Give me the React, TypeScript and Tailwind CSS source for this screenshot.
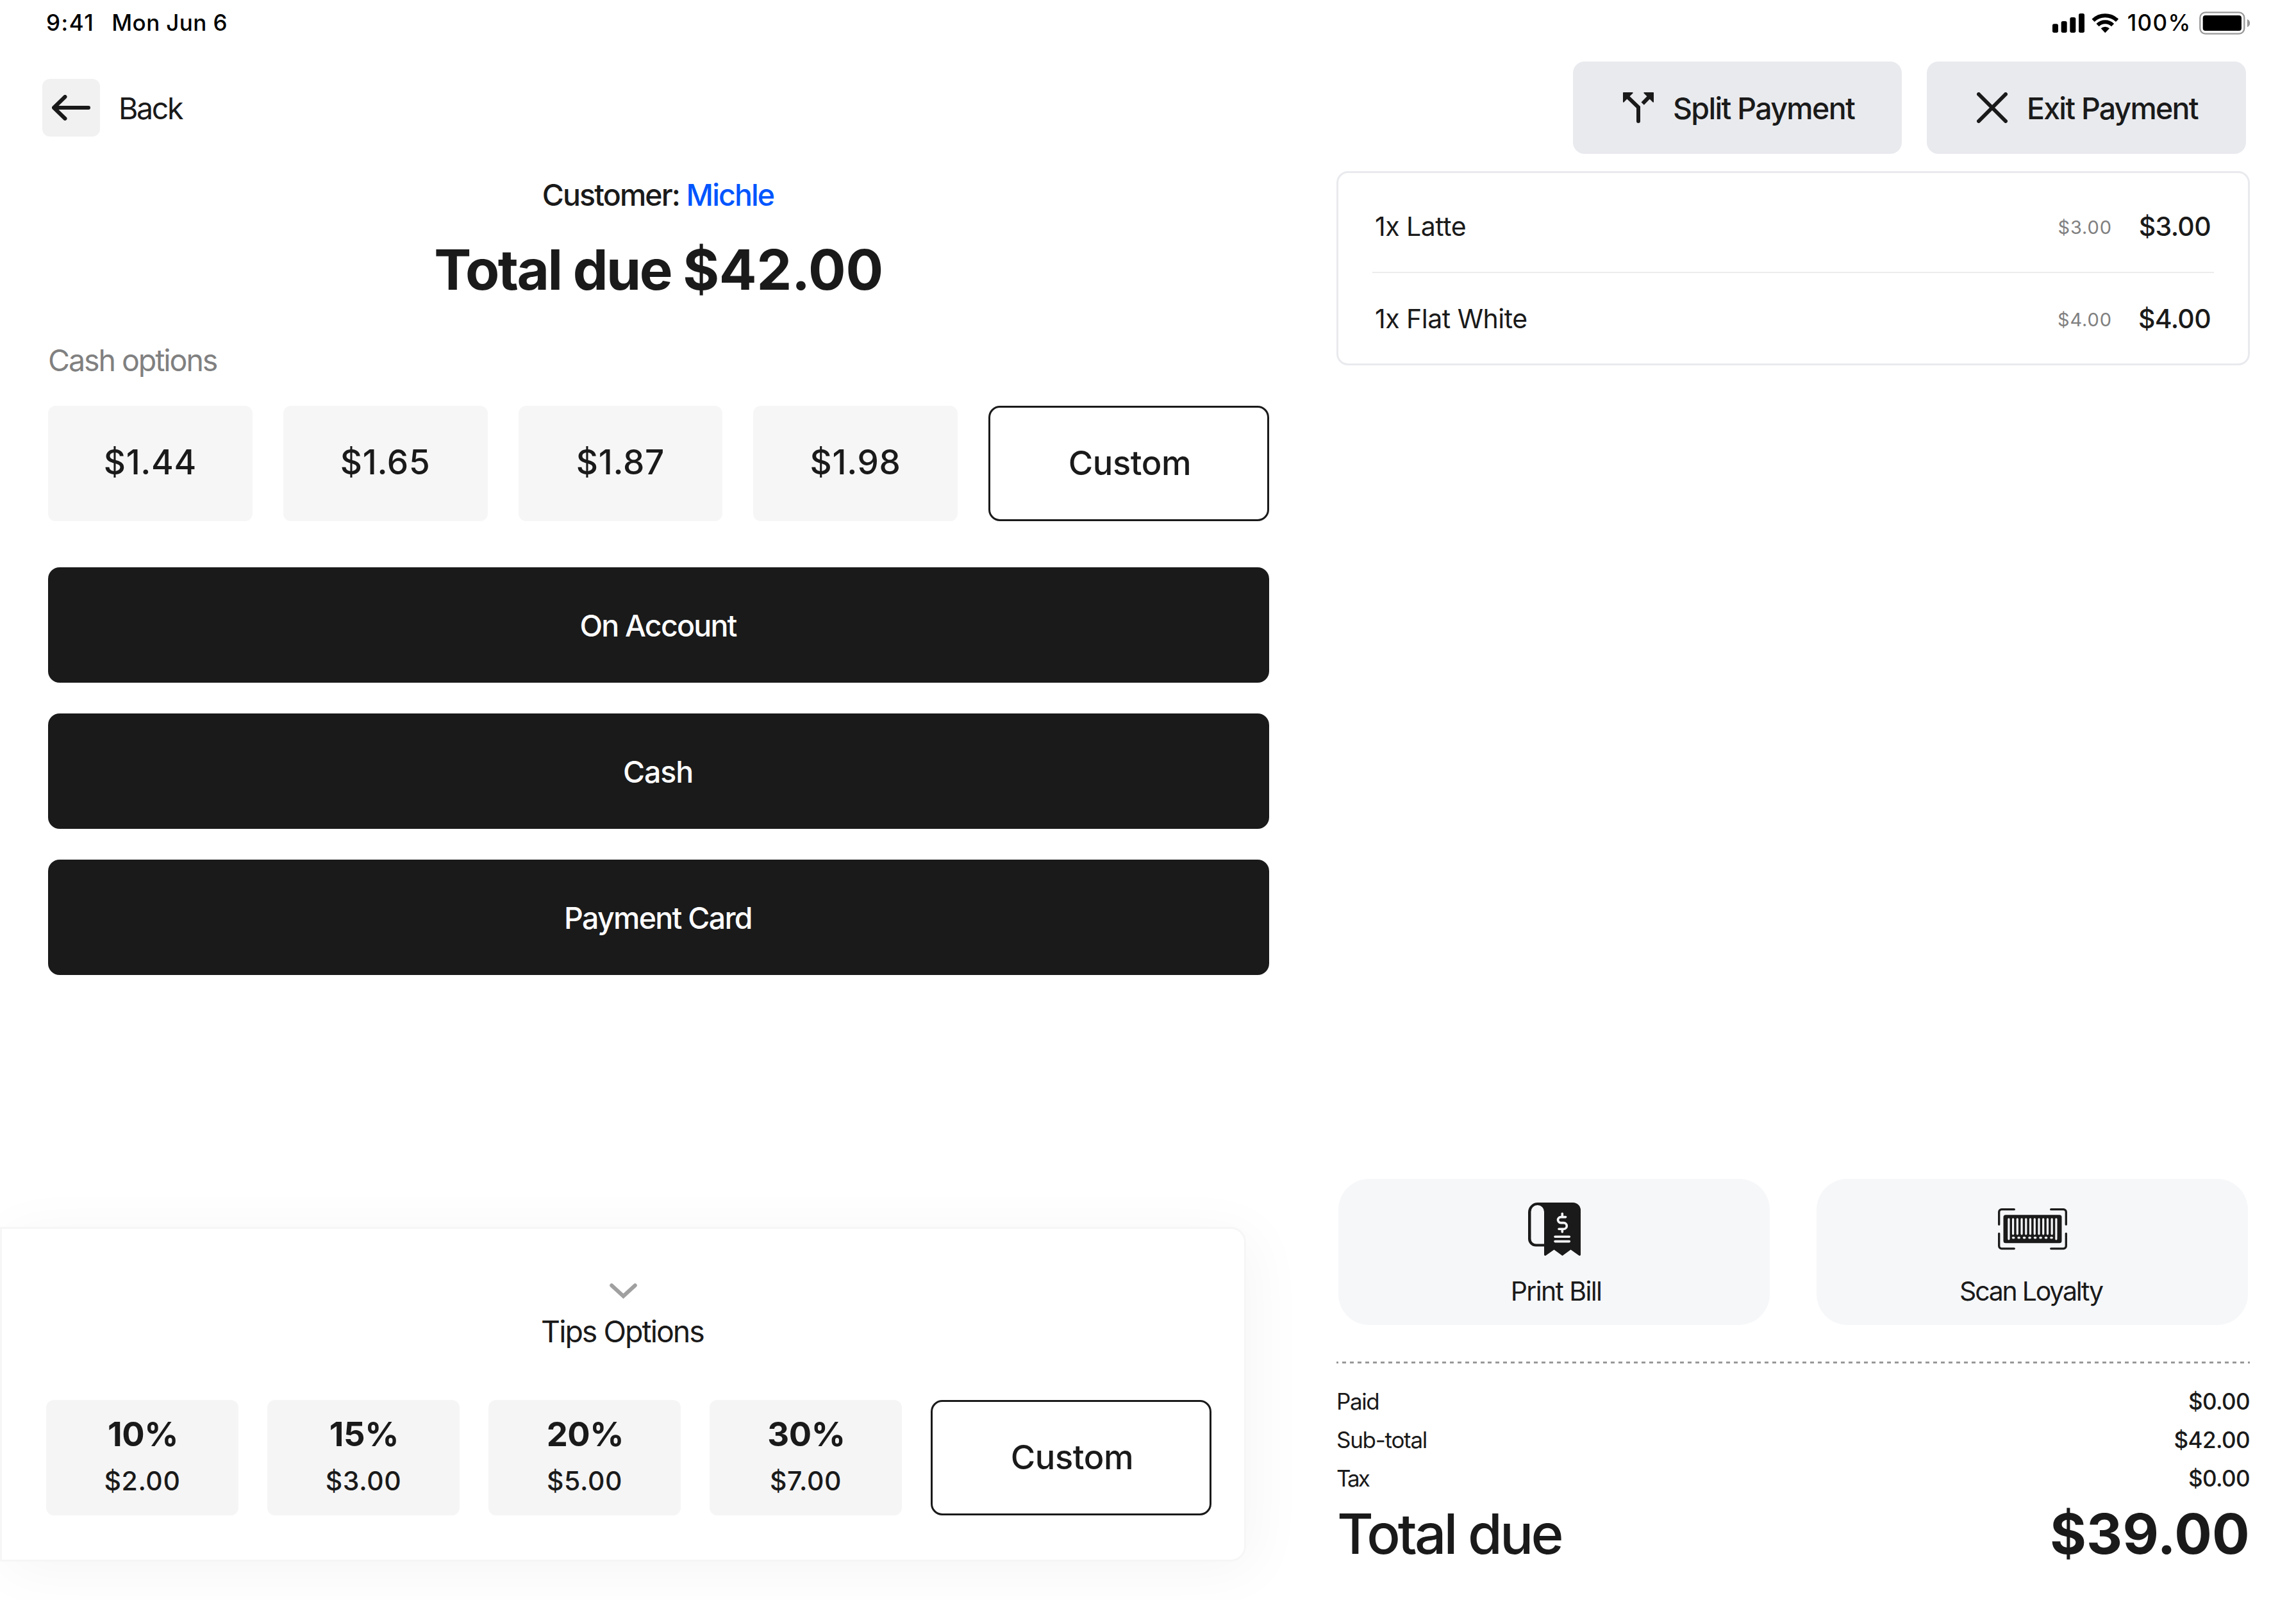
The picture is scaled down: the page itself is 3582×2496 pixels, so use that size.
import type { ReactNode } from "react";

type OrderItem = { name: string; unit: string; total: string };

const cashOptions = ["$1.44", "$1.65", "$1.87", "$1.98"];

const methods = [
  { label: "On Account", tracking: "tracking-[-1.8px]" },
  { label: "Cash", tracking: "tracking-[-1.1px]" },
  { label: "Payment Card", tracking: "tracking-[-1.7px]" },
];

const tips = [
  { percent: "10%", amount: "$2.00" },
  { percent: "15%", amount: "$3.00" },
  { percent: "20%", amount: "$5.00" },
  { percent: "30%", amount: "$7.00" },
];

const items: OrderItem[] = [
  { name: "1x Latte", unit: "$3.00", total: "$3.00" },
  { name: "1x Flat White", unit: "$4.00", total: "$4.00" },
];

const totals = [
  { label: "Paid", value: "$0.00", tracking: "tracking-[-1.4px]" },
  { label: "Sub-total", value: "$42.00", tracking: "tracking-[-1.28px]" },
  { label: "Tax", value: "$0.00", tracking: "tracking-[-3px]" },
];

function SignalIcon() {
  return (
    <svg width="50" height="30" viewBox="0 0 150 90" fill="#000">
      <rect x="0" y="49" width="27" height="41" rx="8" />
      <rect x="41" y="36" width="27" height="54" rx="8" />
      <rect x="82" y="18" width="27" height="72" rx="8" />
      <rect x="123" y="0" width="27" height="90" rx="8" />
    </svg>
  );
}

function WifiIcon() {
  return (
    <svg width="42.6" height="30.3" viewBox="0 0 128 91" fill="none" stroke="#000" strokeWidth="18">
      <path d="M7.7 32.7a81 81 0 0 1 112.6 0" />
      <path d="M28.6 54.3a51 51 0 0 1 70.8 0" />
      <path d="M64 91 44 70a30 30 0 0 1 40 0Z" fill="#000" stroke="none" />
    </svg>
  );
}

function BatteryIcon() {
  return (
    <svg width="79.3" height="36" viewBox="0 0 238 108" fill="none">
      <rect x="4" y="4" width="207" height="100" rx="25" stroke="#999" strokeWidth="7" />
      <rect x="17" y="18" width="181" height="72" rx="12" fill="#000" />
      <path d="M225 36c8 3 13 11 13 18.5s-5 15.5-13 18.5Z" fill="#999" />
    </svg>
  );
}

function BackArrowIcon() {
  return (
    <svg width="60" height="40" viewBox="0 0 60 40" fill="none" stroke="#1a1a1a" strokeWidth="6" strokeLinecap="round" strokeLinejoin="round">
      <path d="M3 20h54M20.5 3 3 20l17.5 17" />
    </svg>
  );
}

function SplitIcon() {
  return (
    <svg width="48" height="48" viewBox="0 0 144 144" fill="none" stroke="#1a1a1a" strokeWidth="18">
      <path d="M20 20 72 70v65" />
      <path d="M72 120v15" strokeLinecap="round" />
      <path d="M124 20 92 53" />
      <path d="M2.500 2.500h42l-42 42ZM141.500 2.500h-42l42 42Z" fill="#1a1a1a" strokeWidth="5" strokeLinejoin="round" />
    </svg>
  );
}

function CloseIcon() {
  return (
    <svg width="48" height="48" viewBox="0 0 48 48" fill="none" stroke="#1a1a1a" strokeWidth="6" strokeLinecap="round">
      <path d="m3 3 42 42M45 3 3 45" />
    </svg>
  );
}

function BillIcon() {
  return (
    <svg width="82" height="83" viewBox="0 0 82 83" fill="none">
      <path
        d="M15 0h55a12 12 0 0 1 12 12v69c0 1.7-1.5 2.5-2.8 1.5L66.5 73.5 53.5 83 40.5 73.5 27.8 82.5C26.5 83.5 25 82.7 25 81V68.5H12A12 12 0 0 1 0 56.5V15A15 15 0 0 1 15 0Z"
        fill="#1a1a1a"
      />
      <path d="M14.7 4A10.3 10.3 0 0 1 25 14.3V64.5H12.5a8 8 0 0 1-8-8V14.3A10.2 10.2 0 0 1 14.7 4Z" fill="#f6f7f9" />
      <g stroke="#f6f7f9" strokeLinecap="round" strokeWidth="3.6">
        <path d="M58.6 22.6H51a4.5 4.5 0 0 0 0 9h4.5a4.8 4.8 0 0 1 0 9.6H48" />
        <path d="M53.3 17.3v5M53.3 41.5v4.3" />
        <path d="M42 53.2h22.3M42 60.6h22.3" />
      </g>
    </svg>
  );
}

function BarcodeIcon() {
  return (
    <svg width="108" height="65" viewBox="0 0 108 65" fill="none">
      <g stroke="#1a1a1a" strokeWidth="3.3" strokeLinecap="round">
        <path d="M25.3 1.7H5.7a4 4 0 0 0-4 4v19.5" />
        <path d="M82.7 1.7h19.6a4 4 0 0 1 4 4v19.5" />
        <path d="M25.3 62.8H5.7a4 4 0 0 1-4-4V39.3" />
        <path d="M82.7 62.8h19.6a4 4 0 0 0 4-4V39.3" />
      </g>
      <rect x="8.5" y="10.2" width="91" height="44" rx="3.5" fill="#1a1a1a" />
      <g stroke="#f6f7f9" strokeWidth="3.2" strokeLinecap="round">
        <path d="M16.9 16.8v31M90.9 16.8v31" />
        {Array.from({ length: 10 }, (_, i) => (
          <path key={i} d={`M${23.6 + i * 6.73} 16.8v23`} />
        ))}
        {Array.from({ length: 8 }, (_, i) => (
          <path key={i} d={`M${23.4 + i * 8.48} 45.8h1.5`} />
        ))}
      </g>
    </svg>
  );
}

function StatusBar() {
  return (
    <div className="flex h-[72px] items-center justify-between pr-[72px] pl-[72px] text-[35px] font-medium text-black">
      <div className="flex gap-[27px] pb-[2px]">
        <span className="tracking-[1.5px]">9:41</span>
        <span className="tracking-[0.4px]">Mon Jun 6</span>
      </div>
      <div className="flex items-center">
        <SignalIcon />
        <div className="ml-[11px] flex">
          <WifiIcon />
        </div>
        <span className="mr-[12px] ml-[13px] pb-[2px] tracking-[1.4px]">100%</span>
        <BatteryIcon />
      </div>
    </div>
  );
}

function HeaderButton({ icon, className, children }: { icon: ReactNode; className: string; children: ReactNode }) {
  return (
    <button
      className={`flex h-[144px] items-center gap-[30px] rounded-[18px] bg-[#e9eaee] pl-[78px] text-[46.5px] leading-[60px] font-medium whitespace-nowrap ${className}`}
    >
      {icon}
      <span className="mt-[2px]">{children}</span>
    </button>
  );
}

function CustomButton() {
  return (
    <button className="h-[180px] w-[438px] rounded-[18px] border-3 border-[#1a1a1a] bg-white pb-[2px] pl-[3px] text-[52.5px] font-medium tracking-[-0.4px]">
      Custom
    </button>
  );
}

function TipsPanel() {
  return (
    <section className="mt-auto mb-[60px] flex h-[522px] w-[1944px] flex-col rounded-r-[24px] border-3 border-[#f6f6f6] bg-white pt-[85px] shadow-[12px_12px_90px_rgba(0,0,0,0.045)]">
      <svg className="self-center" width="43" height="24" viewBox="0 0 43 24" fill="none" stroke="#a0a0a0" strokeWidth="6" strokeLinecap="round">
        <path d="m3.200 3.200 18.300 16.800L39.800 3.200" />
      </svg>
      <h2 className="mt-[21px] pr-[2px] text-center text-[46.5px] leading-[60px] tracking-[-2px]">Tips Options</h2>
      <div className="mt-[77px] flex gap-[45px] pl-[69px]">
        {tips.map((tip) => (
          <button key={tip.percent} className="flex h-[180px] w-[300px] flex-col items-center rounded-[12px] bg-[#f5f5f5] pt-[23px]">
            <span className="pl-[2px] text-[52.5px] leading-[60px] font-bold tracking-[-0.4px]">{tip.percent}</span>
            <span className="mt-[16px] text-[41px] leading-[54px] font-medium tracking-[0.6px]">{tip.amount}</span>
          </button>
        ))}
        <CustomButton />
      </div>
    </section>
  );
}

function PaymentColumn() {
  return (
    <main className="flex w-[2085px] flex-col">
      <div className="ml-[75px] flex w-[1905px] flex-col">
        <p className="mt-[34px] pr-[2px] text-center text-[46.5px] leading-[60px] font-medium tracking-[-1.88px]">
          Customer: <span className="text-[#0055ff]">Michle</span>
        </p>
        <h1 className="mt-[27px] text-center text-[87px] leading-[120px] font-bold tracking-[-2.5px]">
          Total due <span className="tracking-[-0.3px]">$42.00</span>
        </h1>
        <h2 className="mt-[51px] text-[46.5px] leading-[60px] tracking-[-2.05px] text-[#808080]">Cash options</h2>
        <div className="mt-[41px] flex gap-[48px]">
          {cashOptions.map((amount) => (
            <button key={amount} className="h-[180px] flex-1 rounded-[12px] bg-[#f6f6f6] pb-[2px] text-[53px] font-medium tracking-[0.7px]">
              {amount}
            </button>
          ))}
          <CustomButton />
        </div>
        <div className="mt-[72px] flex flex-col gap-[48px]">
          {methods.map((method) => (
            <button
              key={method.label}
              className={`h-[180px] rounded-[18px] bg-[#1a1a1a] pt-[3px] pr-[2px] text-[46.5px] font-medium text-white ${method.tracking}`}
            >
              {method.label}
            </button>
          ))}
        </div>
      </div>
      <TipsPanel />
    </main>
  );
}

function OrderRow({ item }: { item: OrderItem }) {
  return (
    <li className="flex h-[143px] items-center border-[#ececec] pr-[5px] pl-[4px] not-last:border-b-2">
      <span className="flex-1 text-[41px] tracking-[-0.5px]">{item.name}</span>
      <span className="pt-[3px] text-[29px] tracking-[0.9px] text-[#808080]">{item.unit}</span>
      <span className="w-[154px] text-right text-[41px] font-medium tracking-[-0.65px]">{item.total}</span>
    </li>
  );
}

function ActionTile({ icon, children, className }: { icon: ReactNode; children: ReactNode; className: string }) {
  return (
    <button className="flex h-[228px] w-[673px] flex-col items-center rounded-[48px] bg-[#f6f7f9] pt-[37px]">
      <span className="flex h-[83px] items-center">{icon}</span>
      <span className={`mt-[28px] text-[41px] leading-[54px] ${className}`}>{children}</span>
    </button>
  );
}

function OrderColumn() {
  return (
    <aside className="flex w-[1425px] flex-col pt-[27px]">
      <ul className="h-[303px] rounded-[18px] border-3 border-[#e9eaee] px-[53px] pt-[13px]">
        {items.map((item) => (
          <OrderRow key={item.name} item={item} />
        ))}
      </ul>
      <div className="mt-auto flex justify-between px-[3px]">
        <ActionTile icon={<BillIcon />} className="pl-[6px] tracking-[-1.65px]">
          Print Bill
        </ActionTile>
        <ActionTile icon={<BarcodeIcon />} className="pr-[4px] tracking-[-2.23px]">
          Scan Loyalty
        </ActionTile>
      </div>
      <div className="mt-[57px] h-[3px] bg-[repeating-linear-gradient(90deg,#999_0_3px,transparent_3px_8.975px,#999_8.975px_11.975px)]" />
      <dl className="mt-[29px] mb-[49px]">
        {totals.map((row) => (
          <div key={row.label} className="flex justify-between text-[35px] leading-[60px]">
            <dt className={row.tracking}>{row.label}</dt>
            <dd className="font-medium tracking-[-0.6px]">{row.value}</dd>
          </div>
        ))}
        <div className="mt-[3px] flex justify-between pl-[1px] text-[87px] leading-[108px]">
          <dt className="font-medium tracking-[-3.85px]">Total due</dt>
          <dd className="font-bold tracking-[0.2px]">$39.00</dd>
        </div>
      </dl>
    </aside>
  );
}

export default function App() {
  return (
    <div className="flex h-[2496px] w-[3582px] flex-col overflow-hidden bg-white font-['Inter','Liberation_Sans',sans-serif] text-[#1a1a1a]">
      <StatusBar />
      <header className="mt-[24px] flex items-center justify-between pr-[78px] pl-[66px]">
        <button className="flex items-center gap-[29px] text-[46.5px] leading-[60px] tracking-[-2.4px]">
          <span className="flex size-[90px] items-center justify-center rounded-[12px] bg-[#f1f1f1]">
            <BackArrowIcon />
          </span>
          <span className="mt-[2px]">Back</span>
        </button>
        <div className="flex gap-[39px]">
          <HeaderButton icon={<SplitIcon />} className="w-[513px] tracking-[-1.68px]">
            Split Payment
          </HeaderButton>
          <HeaderButton icon={<CloseIcon />} className="w-[498px] tracking-[-1.8px]">
            Exit Payment
          </HeaderButton>
        </div>
      </header>
      <div className="flex flex-1">
        <PaymentColumn />
        <OrderColumn />
      </div>
    </div>
  );
}
